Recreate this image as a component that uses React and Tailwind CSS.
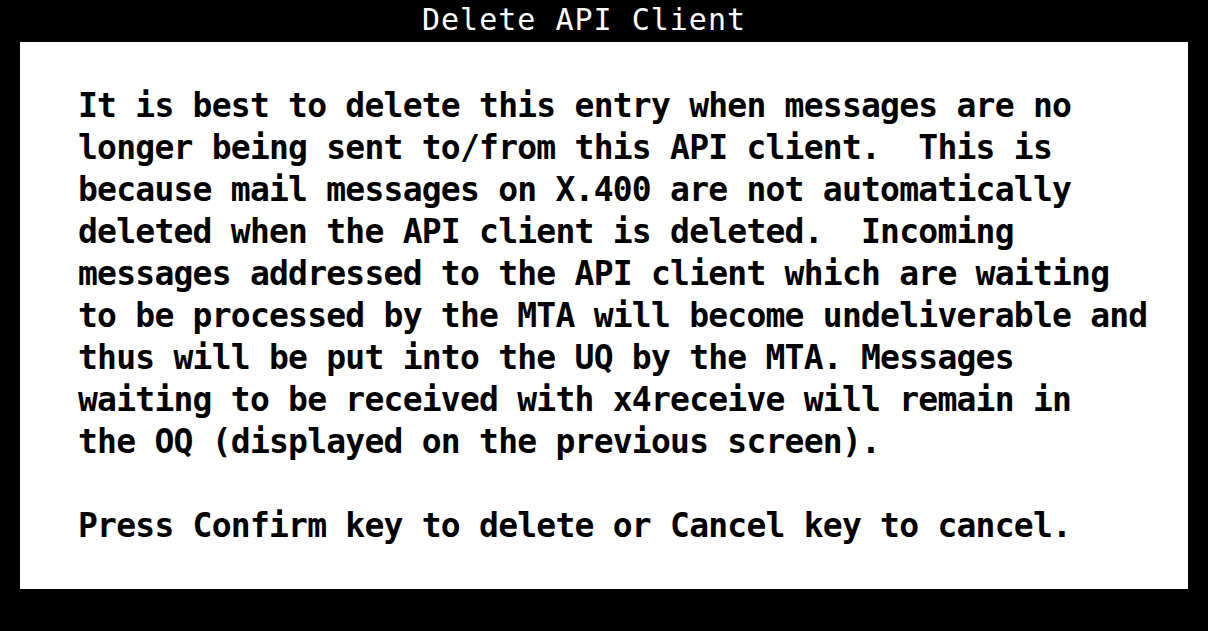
export default function App() {
  const lines = [
    "It is best to delete this entry when messages are no",
    "longer being sent to/from this API client.  This is",
    "because mail messages on X.400 are not automatically",
    "deleted when the API client is deleted.  Incoming",
    "messages addressed to the API client which are waiting",
    "to be processed by the MTA will become undeliverable and",
    "thus will be put into the UQ by the MTA. Messages",
    "waiting to be received with x4receive will remain in",
    "the OQ (displayed on the previous screen).",
    " ",
    "Press Confirm key to delete or Cancel key to cancel.",
  ];
  return (
    <div className="w-[1208px] h-[631px] bg-black flex flex-col overflow-hidden">
      <div className="h-[42px] flex pl-[422px] items-start">
        <span className="text-white text-[30px] leading-[39px] tracking-[1px] whitespace-pre font-['DejaVu_Sans_Mono',monospace]">
          Delete API Client
        </span>
      </div>
      <div className="mx-[20px] h-[547px] bg-white pl-[58px] pt-[43px]">
        {lines.map((l, i) => (
          <div
            key={i}
            className="h-[42px] text-black font-bold text-[33px] leading-[42px] tracking-[-0.77px] whitespace-pre font-['DejaVu_Sans_Mono',monospace]"
          >
            {l}
          </div>
        ))}
      </div>
    </div>
  );
}
